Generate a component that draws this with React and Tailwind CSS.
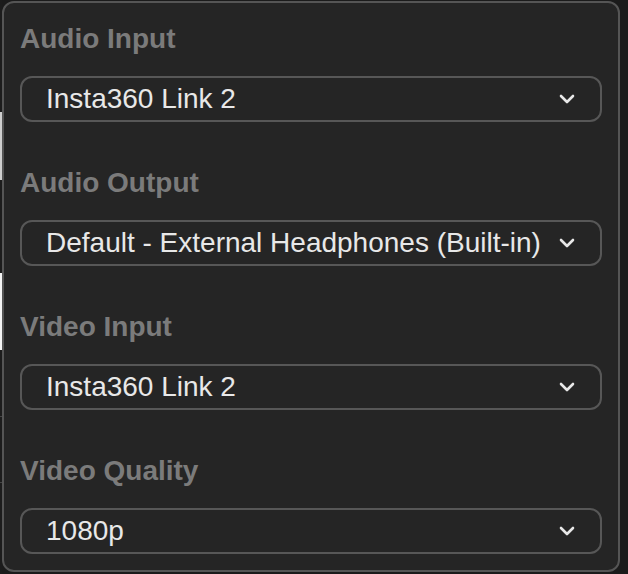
import React from "react";

const fields = [
  { label: "Audio Input", value: "Insta360 Link 2" },
  { label: "Audio Output", value: "Default - External Headphones (Built-in)" },
  { label: "Video Input", value: "Insta360 Link 2" },
  { label: "Video Quality", value: "1080p" },
];

const Chevron = () => (
  <svg width="16" height="10" viewBox="0 0 16 10" fill="none" className="shrink-0">
    <polyline
      points="2,2 8,8 14,2"
      stroke="#e8e8e8"
      strokeWidth="2.6"
      strokeLinecap="round"
      strokeLinejoin="round"
    />
  </svg>
);

const SelectField = ({ label, value }) => (
  <div className="flex flex-col">
    <label className="text-[28px] leading-[32px] font-bold text-[#7b7b7b] mb-[21px]">{label}</label>
    <div className="h-[46px] flex items-center justify-between border-2 border-[#575757] rounded-[12px] pl-[24px] pr-[25px]">
      <span className="text-[28px] leading-[32px] text-[#e8e8e8] whitespace-nowrap">{value}</span>
      <Chevron />
    </div>
  </div>
);

export default function App() {
  return (
    <div
      className="flex w-[628px] h-[574px] bg-[#1b1b1b] overflow-hidden"
      style={{ fontFamily: '"Liberation Sans", Arial, sans-serif' }}
    >
      {/* sliver of the page behind the popover */}
      <div className="flex flex-col w-[2px] shrink-0">
        <div className="h-[112px] bg-[#1c1c1c]" />
        <div className="h-[68px] bg-[#cfcfcf]" />
        <div className="h-[93px] bg-[#1c1c1c]" />
        <div className="h-[77px] bg-[#f4f4f4]" />
        <div className="h-[67px] bg-[#1c1c1c] border-b border-[#444]" />
        <div className="h-[66px] bg-[#1c1c1c] border-b border-[#444]" />
        <div className="flex-1 bg-[#1c1c1c]" />
      </div>
      <div className="mt-[1px] w-[618px] h-[571px] shrink-0 bg-[#252525] border-2 border-[#555] rounded-[12px] px-4 pt-[20px] pb-4 flex flex-col gap-[45px]">
        {fields.map((f) => (
          <SelectField key={f.label} label={f.label} value={f.value} />
        ))}
      </div>
    </div>
  );
}
